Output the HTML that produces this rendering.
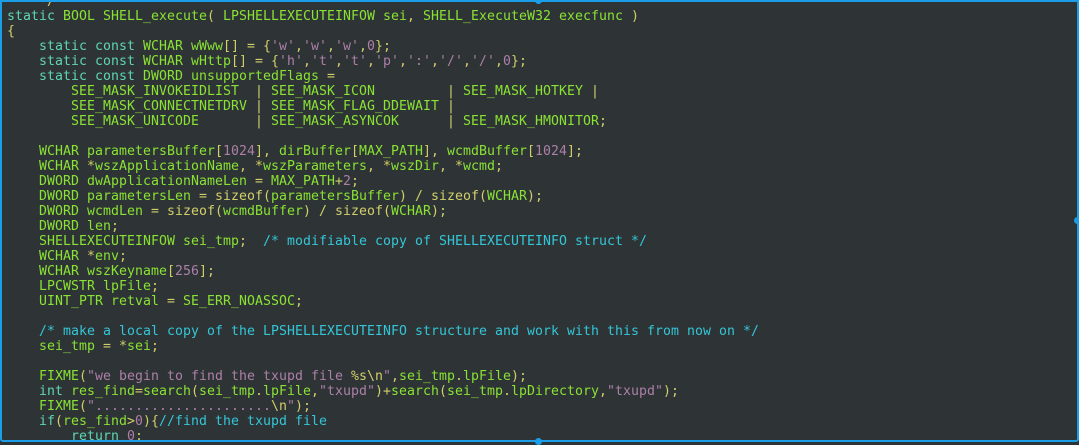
<!DOCTYPE html>
<html><head><meta charset="utf-8"><style>
html,body{margin:0;padding:0;background:#2e3436;width:1079px;height:442px;overflow:hidden}
#box{position:absolute;left:0;top:0;width:1075px;height:438px;border:2px solid #1a9ee8;border-bottom-left-radius:3px;border-bottom-right-radius:3px;background:#2e3436;overflow:hidden}
pre{position:absolute;left:5px;top:-8.5px;margin:0;font-family:"DejaVu Sans Mono","Liberation Mono",monospace;font-size:13.2px;letter-spacing:0.06px;line-height:15px;color:#8ae234}
.k{color:#5fd7af}.y{color:#d3cf6a}.s{color:#ad7fa8}.c{color:#34c6d8}
.dot{position:absolute;width:7px;height:7px;border-radius:50%;background:#1a9ee8}
</style></head><body>
<div id="box"><pre>    <span class="y">*/</span>
<span class="k">static</span> BOOL SHELL_execute<span class="y">(</span> LPSHELLEXECUTEINFOW sei<span class="y">,</span> SHELL_ExecuteW32 execfunc <span class="y">)</span>
<span class="y">{</span>
    <span class="k">static const</span> WCHAR wWww<span class="y">[] = {</span><span class="s">'w'</span><span class="y">,</span><span class="s">'w'</span><span class="y">,</span><span class="s">'w'</span><span class="y">,</span><span class="s">0</span><span class="y">};</span>
    <span class="k">static const</span> WCHAR wHttp<span class="y">[] = {</span><span class="s">'h'</span><span class="y">,</span><span class="s">'t'</span><span class="y">,</span><span class="s">'t'</span><span class="y">,</span><span class="s">'p'</span><span class="y">,</span><span class="s">':'</span><span class="y">,</span><span class="s">'/'</span><span class="y">,</span><span class="s">'/'</span><span class="y">,</span><span class="s">0</span><span class="y">};</span>
    <span class="k">static const</span> DWORD unsupportedFlags <span class="y">=</span>
        SEE_MASK_INVOKEIDLIST  <span class="y">|</span> SEE_MASK_ICON         <span class="y">|</span> SEE_MASK_HOTKEY <span class="y">|</span>
        SEE_MASK_CONNECTNETDRV <span class="y">|</span> SEE_MASK_FLAG_DDEWAIT <span class="y">|</span>
        SEE_MASK_UNICODE       <span class="y">|</span> SEE_MASK_ASYNCOK      <span class="y">|</span> SEE_MASK_HMONITOR<span class="y">;</span>

    WCHAR parametersBuffer<span class="y">[</span><span class="s">1024</span><span class="y">],</span> dirBuffer<span class="y">[</span>MAX_PATH<span class="y">],</span> wcmdBuffer<span class="y">[</span><span class="s">1024</span><span class="y">];</span>
    WCHAR <span class="y">*</span>wszApplicationName<span class="y">, *</span>wszParameters<span class="y">, *</span>wszDir<span class="y">, *</span>wcmd<span class="y">;</span>
    DWORD dwApplicationNameLen <span class="y">=</span> MAX_PATH<span class="y">+</span><span class="s">2</span><span class="y">;</span>
    DWORD parametersLen <span class="y">= sizeof(</span>parametersBuffer<span class="y">) / sizeof(</span>WCHAR<span class="y">);</span>
    DWORD wcmdLen <span class="y">= sizeof(</span>wcmdBuffer<span class="y">) / sizeof(</span>WCHAR<span class="y">);</span>
    DWORD len<span class="y">;</span>
    SHELLEXECUTEINFOW sei_tmp<span class="y">;</span>  <span class="c">/* modifiable copy of SHELLEXECUTEINFO struct */</span>
    WCHAR <span class="y">*</span>env<span class="y">;</span>
    WCHAR wszKeyname<span class="y">[</span><span class="s">256</span><span class="y">];</span>
    LPCWSTR lpFile<span class="y">;</span>
    UINT_PTR retval <span class="y">=</span> SE_ERR_NOASSOC<span class="y">;</span>

    <span class="c">/* make a local copy of the LPSHELLEXECUTEINFO structure and work with this from now on */</span>
    sei_tmp <span class="y">= *</span>sei<span class="y">;</span>

    FIXME<span class="y">(</span><span class="s">"we begin to find the txupd file </span><span class="y">%s\n</span><span class="s">"</span><span class="y">,</span>sei_tmp<span class="y">.</span>lpFile<span class="y">);</span>
    <span class="k">int</span> res_find<span class="y">=</span>search<span class="y">(</span>sei_tmp<span class="y">.</span>lpFile<span class="y">,</span><span class="s">"txupd"</span><span class="y">)+</span>search<span class="y">(</span>sei_tmp<span class="y">.</span>lpDirectory<span class="y">,</span><span class="s">"txupd"</span><span class="y">);</span>
    FIXME<span class="y">(</span><span class="s">"......................</span><span class="y">\n</span><span class="s">"</span><span class="y">);</span>
    <span class="k">if</span><span class="y">(</span>res_find<span class="y">&gt;</span><span class="s">0</span><span class="y">){</span><span class="c">//find the txupd file</span>
        <span class="k">return</span> <span class="s">0</span><span class="y">;</span>
</pre></div>
<div class="dot" style="left:535px;top:-3px"></div>
<div class="dot" style="left:1074px;top:217px"></div>
<div class="dot" style="left:535px;top:438px"></div>
</body></html>
